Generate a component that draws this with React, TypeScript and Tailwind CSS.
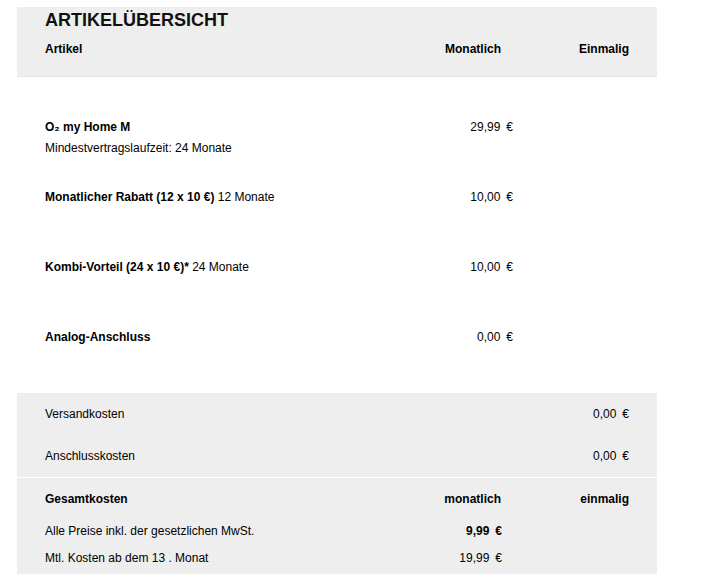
const font = { fontFamily: '"Liberation Sans", Arial, sans-serif' };

function Price({ value, bold }: { value: string; bold?: boolean }) {
  return (
    <span className={bold ? "font-bold" : ""}>
      {value}
      <span className="ml-[6px]">€</span>
    </span>
  );
}

function ItemRow({
  title,
  extra,
  sub,
  price,
  last,
}: {
  title: string;
  extra?: string;
  sub?: string;
  price: string;
  last?: boolean;
}) {
  return (
    <div className={`flex items-start ${last ? "h-[64px]" : "h-[70px]"}`}>
      <div className="flex-1">
        <div className="leading-[16px]">
          <span className="font-bold">{title}</span>
          {extra && <span> {extra}</span>}
        </div>
        {sub && <div className="mt-[4.5px] leading-[16px]">{sub}</div>}
      </div>
      <div className="w-[120px] text-right leading-[16px]">
        <Price value={price} />
      </div>
      <div className="w-[116px]" />
    </div>
  );
}

export default function App() {
  return (
    <div className="min-h-[585px] bg-white pl-[17px] pt-[7px] text-[12px] text-black" style={font}>
      <div className="w-[640px]">
        <header className="h-[70px] border-b border-[#e6e6e6] bg-[#eeeeee] px-[28px] pt-[3px]">
          <h1 className="h-[20px] text-[18px] font-bold leading-[20px] text-[#111]">ARTIKELÜBERSICHT</h1>
          <div className="mt-[11px] flex font-bold leading-[16px]">
            <div className="flex-1">Artikel</div>
            <div className="w-[120px] pr-[12px] text-right">Monatlich</div>
            <div className="w-[116px] text-right">Einmalig</div>
          </div>
        </header>

        <section className="px-[28px] pt-[42px]">
          <ItemRow title="O₂ my Home M" sub="Mindestvertragslaufzeit: 24 Monate" price="29,99" />
          <ItemRow title="Monatlicher Rabatt (12 x 10 €)" extra="12 Monate" price="10,00" />
          <ItemRow title="Kombi-Vorteil (24 x 10 €)*" extra="24 Monate" price="10,00" />
          <ItemRow title="Analog-Anschluss" price="0,00" last />
        </section>

        <section className="bg-[#eeeeee] px-[28px] pb-[13px] pt-[13px] leading-[16px]">
          <div className="flex">
            <div className="flex-1">Versandkosten</div>
            <div className="w-[116px] text-right">
              <Price value="0,00" />
            </div>
          </div>
          <div className="mt-[26px] flex">
            <div className="flex-1">Anschlusskosten</div>
            <div className="w-[116px] text-right">
              <Price value="0,00" />
            </div>
          </div>
        </section>

        <div className="h-px bg-white" />

        <section className="bg-[#eeeeee] px-[28px] pb-[8px] pt-[13px] leading-[16px]">
          <div className="flex font-bold">
            <div className="flex-1">Gesamtkosten</div>
            <div className="w-[120px] pr-[12px] text-right">monatlich</div>
            <div className="w-[116px] text-right">einmalig</div>
          </div>
          <div className="mt-[16px] flex">
            <div className="flex-1">Alle Preise inkl. der gesetzlichen MwSt.</div>
            <div className="w-[120px] pr-[11px] text-right">
              <Price value="9,99" bold />
            </div>
            <div className="w-[116px]" />
          </div>
          <div className="mt-[11px] flex">
            <div className="flex-1">Mtl. Kosten ab dem 13 . Monat</div>
            <div className="w-[120px] pr-[11px] text-right">
              <Price value="19,99" />
            </div>
            <div className="w-[116px]" />
          </div>
        </section>
      </div>
    </div>
  );
}
